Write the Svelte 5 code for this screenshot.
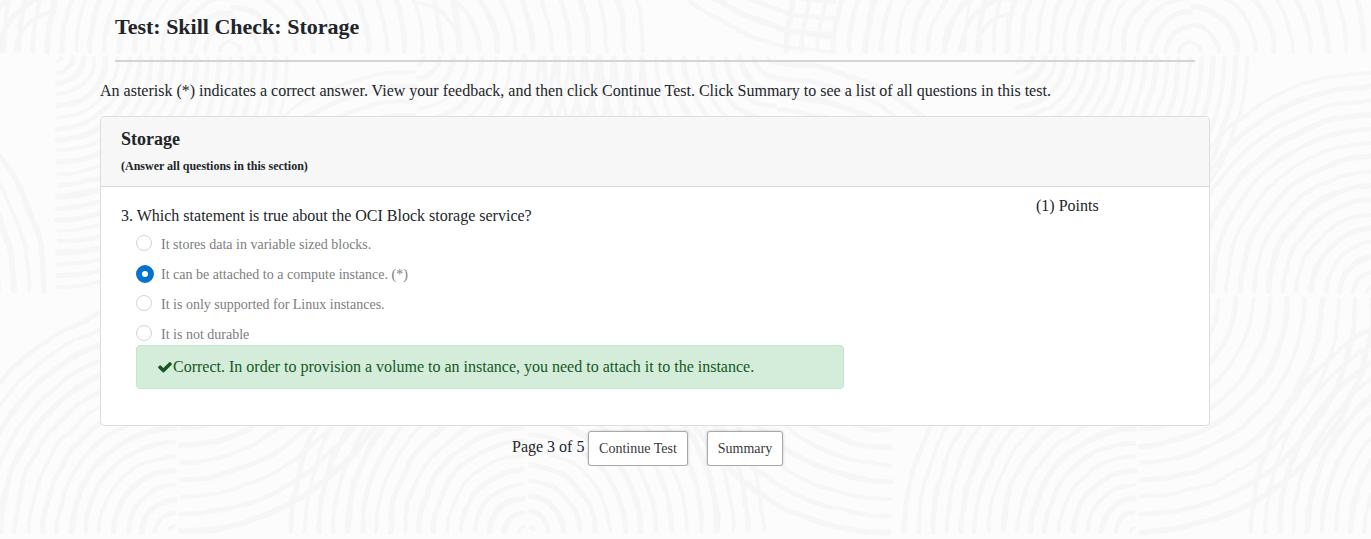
<script>
  const options = [
    'It stores data in variable sized blocks.',
    'It can be attached to a compute instance. (*)',
    'It is only supported for Linux instances.',
    'It is not durable'
  ];
  let selected = $state(1);

  // Arc families of the background tile: centre, horizontal and vertical direction, radius range.
  const families = [
    [232, 53, -1, -1, 12, 234, 14.4],
    [231, 53, 1, -1, 10, 234, 18.2],
    [411, 53, 1, -1, 50, 234, 18.2],
    [836, -184, -1, 1, 186, 237, 16.5],
    [1016, 53, -1, -1, 40, 234, 15.8],
    [56, 56, 1, 1, 5, 236, 11.3],
    [416, 293, -1, -1, 8, 234, 14.2],
    [416, 56, 1, 1, 8, 234, 14.5],
    [776, 56, -1, 1, 8, 234, 14],
    [776, 293, 1, -1, 12, 234, 15.5],
    [176, 533, -1, -1, 6, 234, 14.1],
    [179, 297, 1, 1, 28, 237, 17.2],
    [524, 533, -1, -1, 6, 236, 14.2],
    [528, 533, 1, -1, 6, 236, 15.3],
    [892, 297, -1, 1, 30, 237, 17.2]
  ];

  const strokes = families.flatMap(([cx, cy, dx, dy, from, to, step]) => {
    const list = [];
    for (let r = from, i = 0; r <= to; r += step, i++) {
      const sweep = dx * dy > 0 ? 0 : 1;
      list.push({
        d: `M${cx + dx * 2} ${cy + dy * r}A${r} ${r} 0 0 ${sweep} ${cx + dx * r} ${cy + dy * 2}`,
        w: 3.8 + ((i * 7) % 5) * 0.5
      });
    }
    return list;
  });
</script>

<svg class="backdrop" width="1371" height="539" viewBox="0 0 1371 539" aria-hidden="true">
  <defs>
    <filter id="wobble" x="0" y="0" width="1371" height="539" filterUnits="userSpaceOnUse" color-interpolation-filters="sRGB">
      <feTurbulence type="fractalNoise" baseFrequency="0.035" numOctaves="1" seed="4" />
      <feDisplacementMap in="SourceGraphic" scale="5" xChannelSelector="R" yChannelSelector="G" />
    </filter>
  </defs>
  <g filter="url(#wobble)" fill="none" stroke="#f6f6f6" stroke-linecap="round">
    {#each [-960, 0, 960] as shift}
      <g transform="translate({shift} 0)">
        {#each strokes as s}
          <path d={s.d} stroke-width={s.w} />
        {/each}
      </g>
    {/each}
  </g>
</svg>

<main>
  <h1>Test: Skill Check: Storage</h1>
  <p class="intro">An asterisk (*) indicates a correct answer. View your feedback, and then click Continue Test. Click Summary to see a list of all questions in this test.</p>

  <section class="card">
    <header>
      <h2>Storage</h2>
      <p>(Answer all questions in this section)</p>
    </header>
    <div class="body">
      <div class="question">
        <p class="prompt">3. Which statement is true about the OCI Block storage service?</p>
        <div class="options">
          {#each options as option, i}
            <label>
              <input type="radio" name="answer" checked={selected === i} disabled />
              <span class="dot"></span>
              <span class="text">{option}</span>
            </label>
          {/each}
        </div>
        <div class="feedback">
          <svg width="16" height="16" viewBox="0 0 1792 1792" aria-hidden="true">
            <path fill="currentColor" d="M1671 566q0 40-28 68l-724 724-136 136q-28 28-68 28t-68-28l-136-136-362-362q-28-28-28-68t28-68l136-136q28-28 68-28t68 28l294 295 656-657q28-28 68-28t68 28l136 136q28 28 28 68z" />
          </svg>
          <span>Correct. In order to provision a volume to an instance, you need to attach it to the instance.</span>
        </div>
      </div>
      <div class="points">(1) Points</div>
    </div>
  </section>

  <nav>
    <span>Page 3 of 5</span>
    <button>Continue Test</button>
    <button class="summary">Summary</button>
  </nav>
</main>

<style>
  :global(body) {
    background: #fcfcfc;
    overflow: hidden;
  }
  .backdrop {
    position: absolute;
    top: 0;
    left: 0;
    z-index: -1;
  }
  main {
    width: 1110px;
    margin-left: 100px;
    display: flow-root;
    font: 16px/24px "Liberation Serif", "Times New Roman", serif;
    color: #212529;
  }
  h1, h2, p {
    margin: 0;
  }
  h1 {
    margin: 0 15px;
    padding: 14px 0 20px;
    border-bottom: 2px solid #d4d4d4;
    font-size: 22px;
    line-height: 26px;
  }
  .intro {
    margin: 17px 0 13px;
    white-space: nowrap;
  }
  .card {
    box-sizing: border-box;
    height: 310px;
    border: 1px solid #dcdddd;
    border-radius: 4px;
    background: #fff;
    overflow: hidden;
  }
  header {
    box-sizing: border-box;
    height: 70px;
    padding: 11px 20px;
    background: #f7f7f7;
    border-bottom: 1px solid #d6d7d7;
  }
  h2 {
    font-size: 18px;
    line-height: 22px;
  }
  header p {
    margin-top: 7px;
    font-size: 12px;
    font-weight: bold;
    line-height: 18px;
  }
  .body {
    display: flex;
    padding: 7px 20px 0;
  }
  .question {
    width: 915px;
    padding-top: 10px;
  }
  .options {
    padding: 1px 0 0 15px;
  }
  label {
    display: flex;
    align-items: center;
    height: 30px;
    font-size: 14px;
    color: #7d7d7d;
  }
  input {
    display: none;
  }
  .dot {
    box-sizing: border-box;
    width: 16px;
    height: 16px;
    margin: 0 9px 2px 0;
    border: 1px solid #d3d3d3;
    border-radius: 50%;
    background: #fff;
  }
  input:checked + .dot {
    width: 18px;
    height: 18px;
    margin: 0 7px 0 0;
    border: 6px solid #0572ce;
  }
  .text {
    padding-top: 2px;
  }
  .feedback {
    box-sizing: border-box;
    display: flex;
    align-items: center;
    width: 708px;
    height: 44px;
    margin: -4px 0 0 15px;
    padding-left: 20px;
    border: 1px solid #c3e6cb;
    border-radius: 4px;
    background: #d4edda;
    color: #155724;
  }
  .points {
    height: 24px;
  }
  nav {
    display: flex;
    align-items: flex-start;
    margin: 5px 0 0 412px;
  }
  nav span {
    margin: 4px 4px 0 0;
  }
  button {
    box-sizing: border-box;
    width: 100px;
    height: 35px;
    padding: 0 1px 0 0;
    border: 1px solid #a8a8a8;
    border-radius: 3px;
    background: #fff;
    box-shadow: 0 0 3px rgba(0, 0, 0, 0.22);
    font: 14px "Liberation Serif", "Times New Roman", serif;
    color: #383838;
  }
  .summary {
    width: 76px;
    margin-left: 19px;
  }
</style>
